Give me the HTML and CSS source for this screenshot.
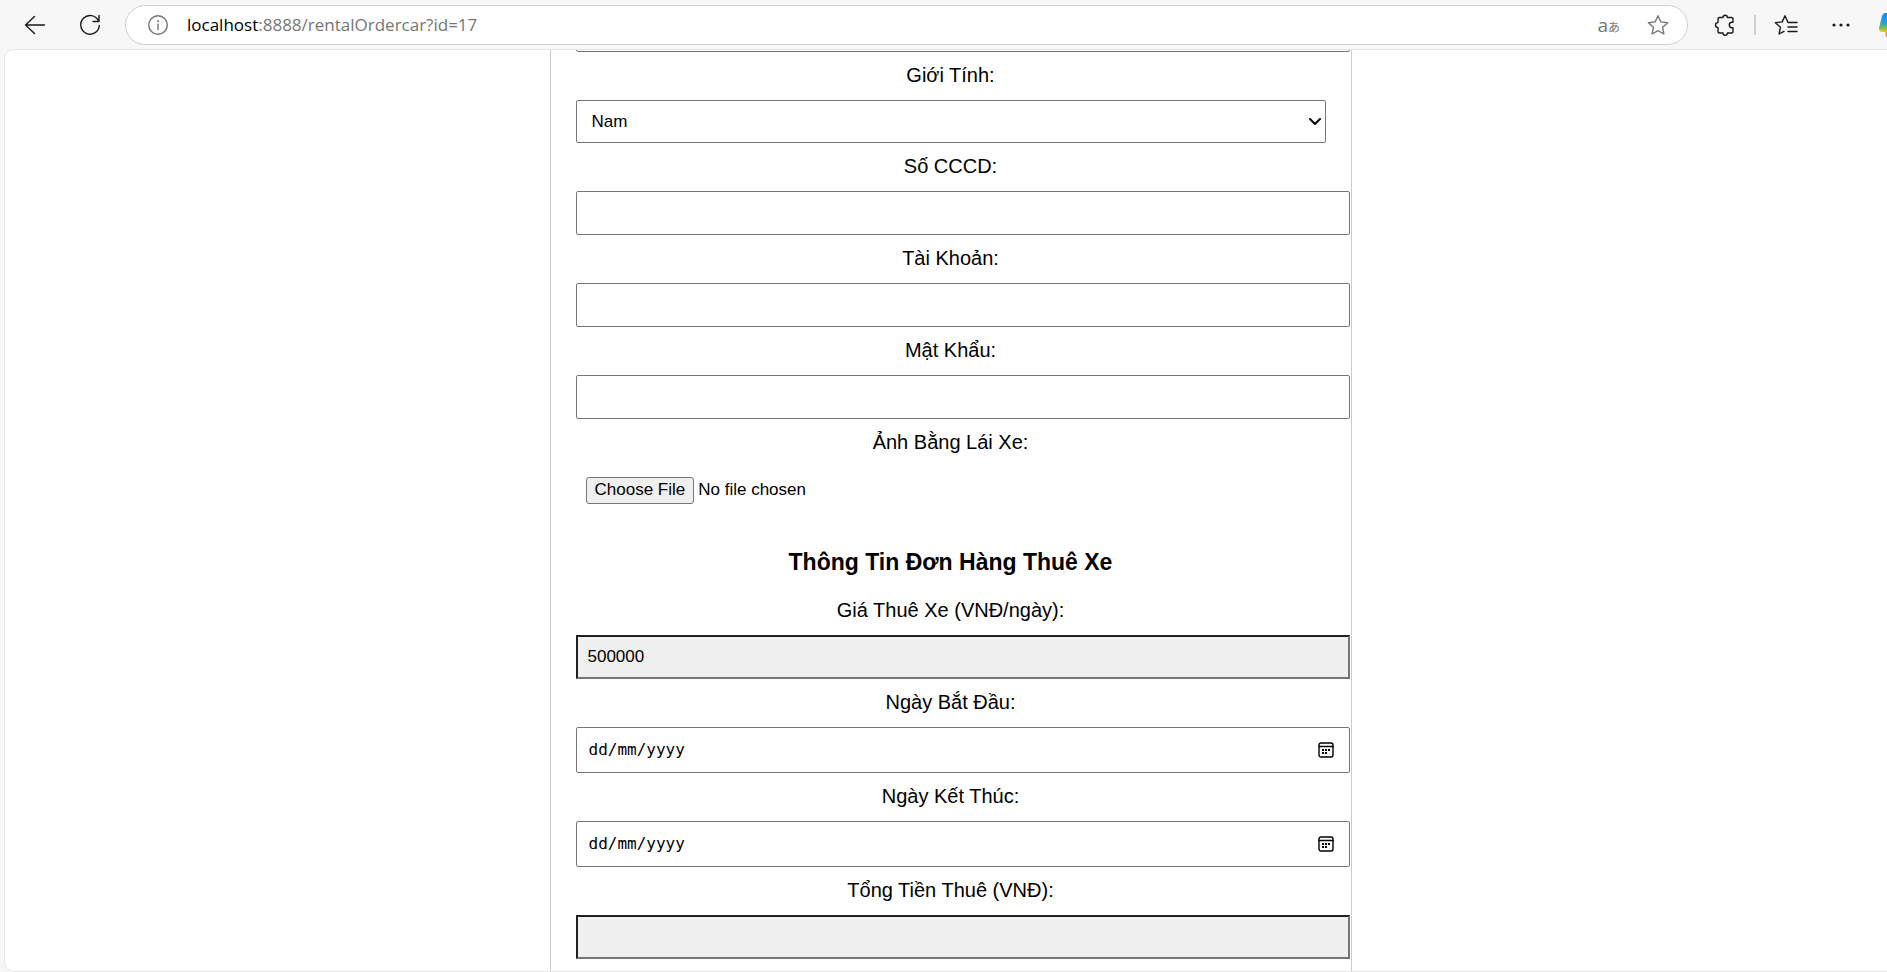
FILE: index.html
```html
<!DOCTYPE html>
<html lang="vi">
<head>
<meta charset="utf-8">
<title>Thuê Xe</title>
<link rel="stylesheet" href="styles.css">
</head>
<body>
<header class="toolbar">
  <button class="tool back" type="button" aria-label="Back"><svg width="24" height="24" viewBox="0 0 24 24"><path d="M21.500 12H2.500M11.500 3.500L2.500 12l9 8.500"/></svg></button>
  <button class="tool refresh" type="button" aria-label="Refresh"><svg width="24" height="24" viewBox="0 0 24 24"><path d="M20.500 8A9.300 9.300 0 1 0 21.300 12.500M21 2.500V8.500H15"/></svg></button>
  <div class="address">
    <svg class="muted" width="24" height="24" viewBox="0 0 24 24"><circle cx="12" cy="12" r="9.300"/><path d="M12 11v5.500"/><circle class="solid" cx="12" cy="8" r="1"/></svg>
    <div class="url"><span class="host">localhost</span>:8888/rentalOrdercar?id=17</div>
    <button class="translate" type="button" aria-label="Translate">a<span class="kana">あ</span></button>
    <button class="tool muted" type="button" aria-label="Favorite"><svg width="24" height="24" viewBox="0 0 24 24"><path d="M12 2.700l2.800 6.200 6.800.8-5 4.600 1.300 6.700L12 17.700 6.100 21l1.300-6.700-5-4.600 6.800-.8z"/></svg></button>
  </div>
  <button class="tool extensions" type="button" aria-label="Extensions"><svg width="24" height="24" viewBox="0 0 24 24"><path d="M6.500 4.500H10a2.200 2.200 0 0 1 4.400 0H18.500a1.500 1.500 0 0 1 1.500 1.500V9.300H19a2.700 2.700 0 0 0 0 5.400H20V18.500a1.500 1.500 0 0 1-1.500 1.500H14.400a2.200 2.200 0 0 1-4.400 0H6.500A1.500 1.500 0 0 1 5 18.500V14.600a2.500 2.500 0 0 1 0-5V6a1.500 1.500 0 0 1 1.500-1.500z"/></svg></button>
  <span class="divider"></span>
  <button class="tool collections" type="button" aria-label="Favorites list"><svg width="24" height="24" viewBox="0 0 24 24"><path d="M23 9.500H14L11 2.700 8.200 8.900l-6.800.8 5 4.600-1.300 6.700L10 18.300M14 14h9M14 18.500h9"/></svg></button>
  <button class="tool more" type="button" aria-label="More"><svg width="24" height="24" viewBox="0 0 24 24"><g class="solid"><circle cx="5" cy="12" r="1.600"/><circle cx="12" cy="12" r="1.600"/><circle cx="19" cy="12" r="1.600"/></g></svg></button>
  <button class="copilot" type="button" aria-label="Copilot"><svg width="20" height="28" viewBox="0 0 20 28"><defs><linearGradient id="hue" x1="0" y1="0" x2="0" y2="1"><stop offset="0.150" stop-color="#1a8ff0"/><stop offset="0.400" stop-color="#25a5c8"/><stop offset="0.600" stop-color="#7cc04a"/><stop offset="0.750" stop-color="#f0c810"/><stop offset="0.900" stop-color="#f4705a"/></linearGradient></defs><path fill="url(#hue)" stroke="none" d="M6 2H20V27H9Q7 27 6 21H3Q0 21 0 17L3 5Q4 2 6 2z"/></svg></button>
</header>
<main class="viewport">
  <form class="order">
    <input class="field" type="text" aria-label="Họ Tên">
    <label class="label" for="gender">Giới Tính:</label>
    <div class="select-box">
      <select class="field select" id="gender"><option>Nam</option><option>Nữ</option></select>
      <svg class="chevron" width="12" height="8" viewBox="0 0 12 8"><path d="M1 1l5 5 5-5"/></svg>
    </div>
    <label class="label" for="cccd">Số CCCD:</label>
    <input class="field" id="cccd" type="text">
    <label class="label" for="account">Tài Khoản:</label>
    <input class="field" id="account" type="text">
    <label class="label" for="password">Mật Khẩu:</label>
    <input class="field" id="password" type="password">
    <label class="label" for="licence">Ảnh Bằng Lái Xe:</label>
    <input class="file" id="licence" type="file">
    <h3 class="heading">Thông Tin Đơn Hàng Thuê Xe</h3>
    <label class="label" for="price">Giá Thuê Xe (VNĐ/ngày):</label>
    <input class="field readonly" id="price" type="text" value="500000" readonly>
    <label class="label" for="start">Ngày Bắt Đầu:</label>
    <div class="date-box">
      <input class="field date" id="start" type="text" placeholder="dd/mm/yyyy">
      <button class="calendar" type="button" aria-label="Chọn ngày bắt đầu"><svg width="16" height="16" viewBox="0 0 16 16"><rect x="1" y="1" width="14" height="14" rx="2"/><path d="M1 4.500h14"/><path class="dots" d="M4 8h2M7 8h2M10 8h2M4 11h2M7 11h2"/></svg></button>
    </div>
    <label class="label" for="end">Ngày Kết Thúc:</label>
    <div class="date-box">
      <input class="field date" id="end" type="text" placeholder="dd/mm/yyyy">
      <button class="calendar" type="button" aria-label="Chọn ngày kết thúc"><svg width="16" height="16" viewBox="0 0 16 16"><rect x="1" y="1" width="14" height="14" rx="2"/><path d="M1 4.500h14"/><path class="dots" d="M4 8h2M7 8h2M10 8h2M4 11h2M7 11h2"/></svg></button>
    </div>
    <label class="label" for="total">Tổng Tiền Thuê (VNĐ):</label>
    <input class="field readonly" id="total" type="text" readonly>
    <label class="label" for="deposit">Tiền Cọc (VNĐ):</label>
    <input class="field readonly" id="deposit" type="text" readonly>
  </form>
</main>
</body>
</html>
```
FILE: styles.css
```css
* {
  box-sizing: border-box;
}

body {
  margin: 0;
  height: 100vh;
  display: flex;
  flex-direction: column;
  overflow: hidden;
  background: #f7f7f7;
  color: #000;
  font-family: "Liberation Sans", Arial, sans-serif;
}

svg {
  display: block;
  fill: none;
  stroke: currentColor;
  stroke-width: 1.4;
  stroke-linecap: round;
  stroke-linejoin: round;
}

.solid {
  fill: currentColor;
  stroke: none;
}

button {
  padding: 0;
  border: 0;
  background: none;
  color: inherit;
}

.toolbar {
  flex: none;
  height: 49px;
  display: flex;
  align-items: center;
  padding-left: 23px;
  margin-right: -10px;
  color: #1a1a1a;
}

.tool {
  flex: none;
}

.back {
  margin-right: 31px;
}

.refresh {
  margin-right: 23px;
}

.address {
  flex: 1;
  height: 40px;
  display: flex;
  align-items: center;
  padding: 0 17px 0 20px;
  border: 1px solid #d0d0d0;
  border-radius: 20px;
  background: #fff;
}

.muted,
.translate {
  color: #767676;
}

.url {
  flex: 1;
  padding-left: 17px;
  font: 17px "Open Sans", "Noto Sans", sans-serif;
  color: #767676;
}

.host {
  color: #000;
}

.translate {
  display: flex;
  align-items: baseline;
  margin-right: 26px;
  font: 19px "Open Sans", sans-serif;
}

.kana {
  font: 12px "Noto Sans CJK JP", sans-serif;
}

.extensions {
  margin: 0 17px 0 25px;
}

.divider {
  width: 2px;
  height: 20px;
  margin-right: 18px;
  background: #d0d0d0;
}

.more {
  margin: 0 26px 0 31px;
}

.copilot {
  width: 18px;
  overflow: hidden;
}

.viewport {
  flex: 1;
  min-height: 0;
  overflow: hidden;
  margin: 0 -10px 0 4px;
  border: 1px solid #e6e6e6;
  border-radius: 10px;
  background: #fff;
}

.order {
  max-width: 802px;
  margin: -42px auto 0;
  padding: 0 25px;
  border: 1px solid #ccc;
  border-width: 0 1px;
}

.field {
  display: block;
  width: calc(100% + 24px);
  height: 44px;
  padding: 10px;
  border: 1px solid #767676;
  border-radius: 2px;
  background: #fff;
  color: #000;
  font: 17px "Liberation Sans", Arial, sans-serif;
}

.label {
  display: block;
  padding-bottom: 2px;
  font-size: 20px;
  line-height: 46px;
  text-align: center;
}

.select-box,
.date-box {
  position: relative;
}

.select {
  width: 100%;
  height: 43px;
  padding: 0 15px;
  appearance: none;
}

.chevron {
  position: absolute;
  right: 5px;
  top: 18px;
  stroke-width: 2;
}

.file {
  display: block;
  width: 100%;
  height: 48px;
  padding: 10px;
  font: 17px "Liberation Sans", Arial, sans-serif;
}

.file::file-selector-button {
  height: 27px;
  margin-right: 4px;
  padding: 0 8px 2px;
  border: 1px solid #767676;
  border-radius: 3px;
  background: #efefef;
  font: inherit;
}

.heading {
  margin: 23px 0 1px;
  font-size: 23px;
  line-height: 48px;
  text-align: center;
}

.readonly {
  padding: 8px 10px;
  border: 2px inset #767676;
  border-radius: 0;
  background: #efefef;
}

.date {
  height: 46px;
  padding: 0 12px 2px;
  font: 16px "DejaVu Sans Mono", monospace;
}

.date::placeholder {
  color: #000;
}

.calendar {
  position: absolute;
  right: -8px;
  top: 15px;
}

.dots {
  stroke-width: 2;
  stroke-linecap: butt;
}
```
